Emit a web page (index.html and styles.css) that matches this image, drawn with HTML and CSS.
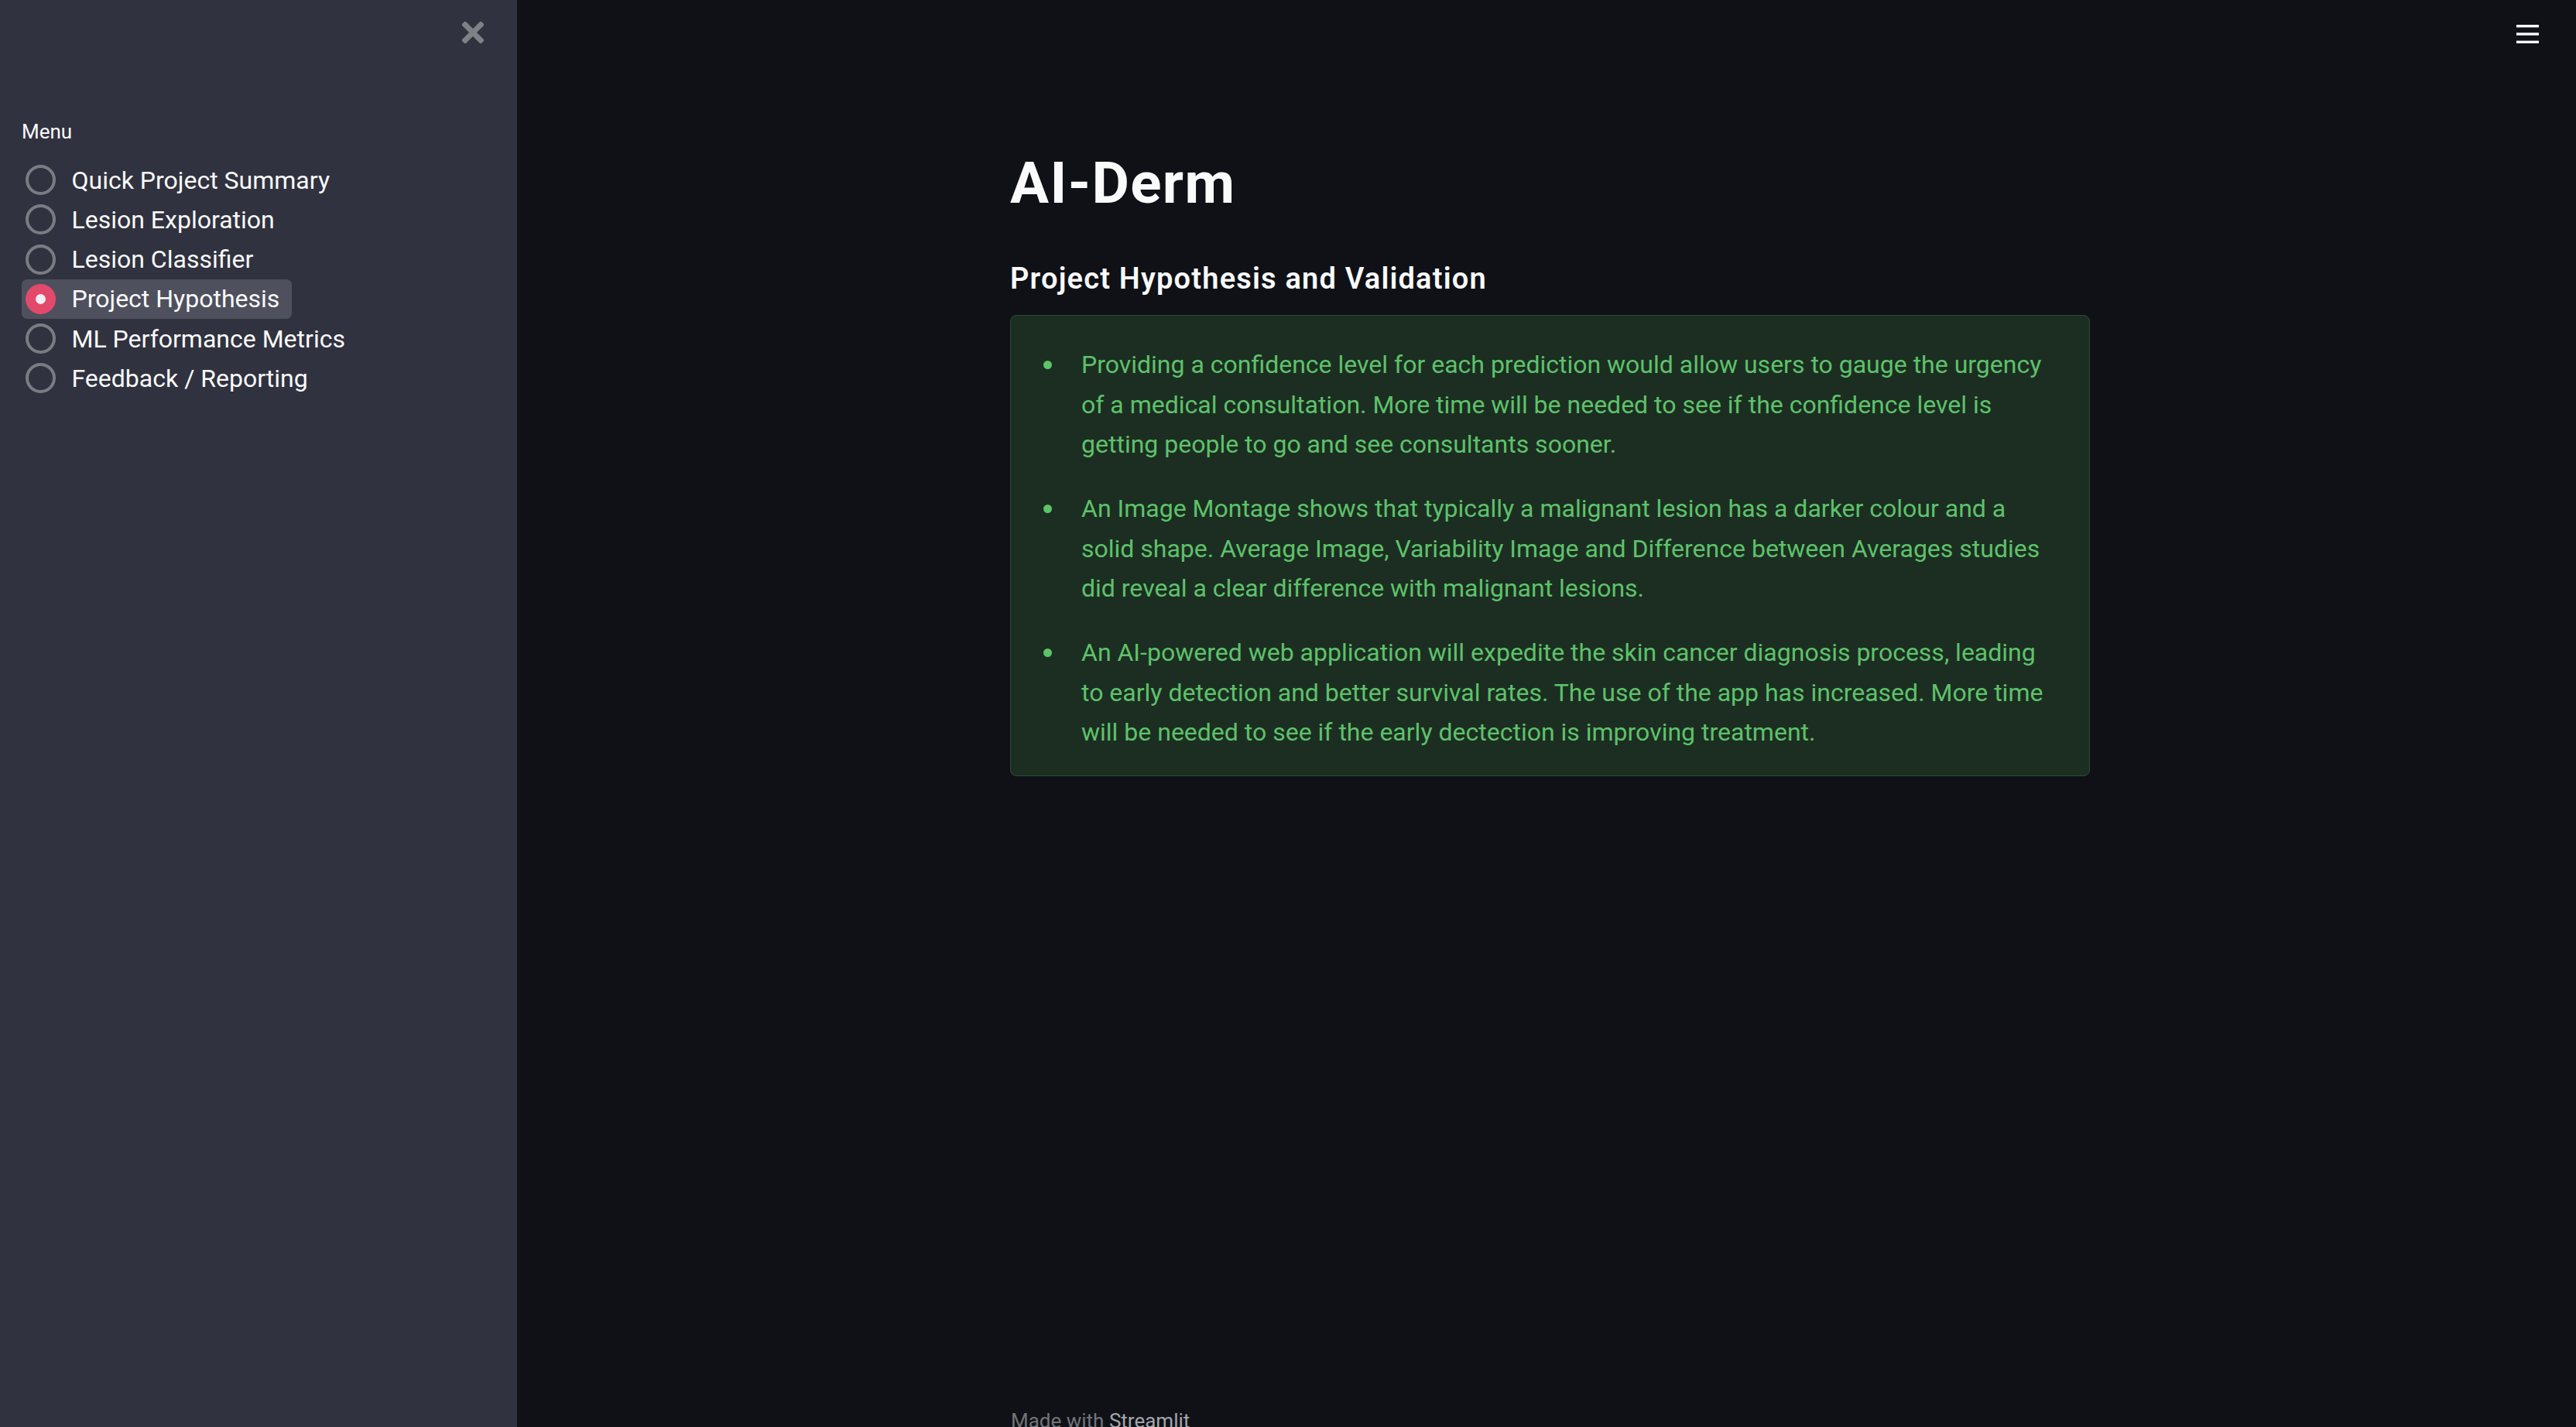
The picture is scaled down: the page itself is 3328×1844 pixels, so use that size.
FILE: index.html
```html
<!DOCTYPE html>
<html lang="en">
<head>
<meta charset="utf-8">
<title>AI-Derm</title>
<link rel="stylesheet" href="styles.css">
</head>
<body>
<div class="app">
  <aside class="sidebar">
    <div class="sidebar-top">
      <button class="close-btn" aria-label="Close sidebar">
        <svg width="28" height="28" viewBox="0 0 28 28"><path d="M4 4 L24 24 M24 4 L4 24" stroke="#808186" stroke-width="7" stroke-linecap="square"/></svg>
      </button>
    </div>
    <div class="menu-label">Menu</div>
    <div class="radio-group">
      <div class="radio-row"><span class="radio"></span><span class="radio-text">Quick Project Summary</span></div>
      <div class="radio-row"><span class="radio"></span><span class="radio-text">Lesion Exploration</span></div>
      <div class="radio-row"><span class="radio"></span><span class="radio-text">Lesion Classifier</span></div>
      <div class="radio-row selected"><span class="radio"></span><span class="radio-text">Project Hypothesis</span></div>
      <div class="radio-row"><span class="radio"></span><span class="radio-text">ML Performance Metrics</span></div>
      <div class="radio-row"><span class="radio"></span><span class="radio-text">Feedback / Reporting</span></div>
    </div>
  </aside>
  <main class="main">
    <header class="topbar">
      <svg class="hamburger" width="29" height="24" viewBox="0 0 29 24"><rect x="0" y="0" width="29" height="3.4" fill="#fafafa"/><rect x="0" y="10.3" width="29" height="3.4" fill="#fafafa"/><rect x="0" y="20.6" width="29" height="3.4" fill="#fafafa"/></svg>
    </header>
    <section class="block">
      <h1 class="title">AI-Derm</h1>
      <h3 class="subtitle">Project Hypothesis and Validation</h3>
      <div class="success-box">
        <ul class="hyp-list">
          <li>Providing a confidence level for each prediction would allow users to gauge the urgency of a medical consultation. More time will be needed to see if the confidence level is getting people to go and see consultants sooner.</li>
          <li>An Image Montage shows that typically a malignant lesion has a darker colour and a solid shape. Average Image, Variability Image and Difference between Averages studies did reveal a clear difference with malignant lesions.</li>
          <li>An AI-powered web application will expedite the skin cancer diagnosis process, leading to early detection and better survival rates. The use of the app has increased. More time will be needed to see if the early dectection is improving treatment.</li>
        </ul>
      </div>
    </section>
    <footer class="footer">Made with <span class="footer-link">Streamlit</span></footer>
  </main>
</div>
</body>
</html>
```

FILE: styles.css
```css
* { box-sizing: border-box; }

html, body {
  margin: 0;
  padding: 0;
  height: 100%;
  background: #0f1117;
  font-family: Roboto, "Liberation Sans", sans-serif;
  color: #fafafa;
}

.app {
  display: flex;
  height: 100vh;
  overflow: hidden;
}

.sidebar {
  width: 668px;
  flex: 0 0 668px;
  background: #30323f;
  padding: 28px 43px 0 28px;
  display: flex;
  flex-direction: column;
  align-items: flex-start;
}

.sidebar-top {
  align-self: stretch;
  display: flex;
  justify-content: flex-end;
  height: 28px;
}

.close-btn {
  border: 0;
  background: transparent;
  padding: 0;
  width: 28px;
  height: 28px;
  display: block;
}
.close-btn svg { display: block; }

.menu-label {
  margin-top: 94px;
  font-size: 26px;
  line-height: 1.6;
  color: #fafafa;
}

.radio-group {
  margin-top: 15.6px;
  display: flex;
  flex-direction: column;
  align-items: flex-start;
}

.radio-row {
  display: flex;
  align-items: center;
  height: 51.2px;
  padding: 0 16px 0 4.5px;
  border-radius: 7px;
  font-size: 32px;
  letter-spacing: 0;
  color: #fafafa;
}

.radio-row.selected {
  background: #4f505d;
}

.radio {
  width: 39px;
  height: 39px;
  border-radius: 50%;
  border: 4px solid #7b7c83;
  flex: 0 0 39px;
  margin-right: 21px;
  display: flex;
  align-items: center;
  justify-content: center;
}

.radio-row.selected .radio {
  border: 0;
  background: #e2496b;
}

.radio-row.selected .radio::after {
  content: "";
  width: 13px;
  height: 13px;
  border-radius: 50%;
  background: #f0f0f5;
}

.main {
  flex: 1;
  display: flex;
  flex-direction: column;
  height: 100vh;
  overflow: hidden;
}

.topbar {
  display: flex;
  justify-content: flex-end;
  padding: 32px 48px 0 0;
  height: 88px;
  flex: 0 0 88px;
}
.hamburger { display: block; }

.block {
  flex: 1;
  width: 1395px;
  margin-left: 637px;
  padding-top: 104px;
}

.title {
  margin: 0;
  font-size: 74.5px;
  line-height: 1.2;
  font-weight: 700;
  letter-spacing: 1.4px;
  color: #fafafa;
}

.subtitle {
  margin: 56.6px 0 0;
  font-size: 38px;
  line-height: 1.2;
  font-weight: 600;
  letter-spacing: 1.2px;
  color: #fafafa;
}

.success-box {
  margin-top: 23.4px;
  background: #1c2e22;
  border: 1px solid #2c4c31;
  border-radius: 8px;
  padding: 38.5px 37px 30px 42px;
}

.hyp-list {
  list-style: none;
  margin: 0;
  padding: 0;
  color: #5ec26a;
  font-size: 32px;
  line-height: 1.6;
}

.hyp-list li {
  display: grid;
  grid-template-columns: 49px 1fr;
  margin-bottom: 32.4px;
}
.hyp-list li:last-child { margin-bottom: 0; }

.hyp-list li::before {
  content: "";
  width: 11px;
  height: 11px;
  border-radius: 50%;
  background: #5ec26a;
  margin-top: 20px;
}

.footer {
  flex: 0 0 28px;
  height: 28px;
  padding-left: 638px;
  font-size: 26px;
  line-height: 1.6;
  color: #72747a;
  white-space: nowrap;
}

.footer-link {
  color: #a4a6aa;
}
```
